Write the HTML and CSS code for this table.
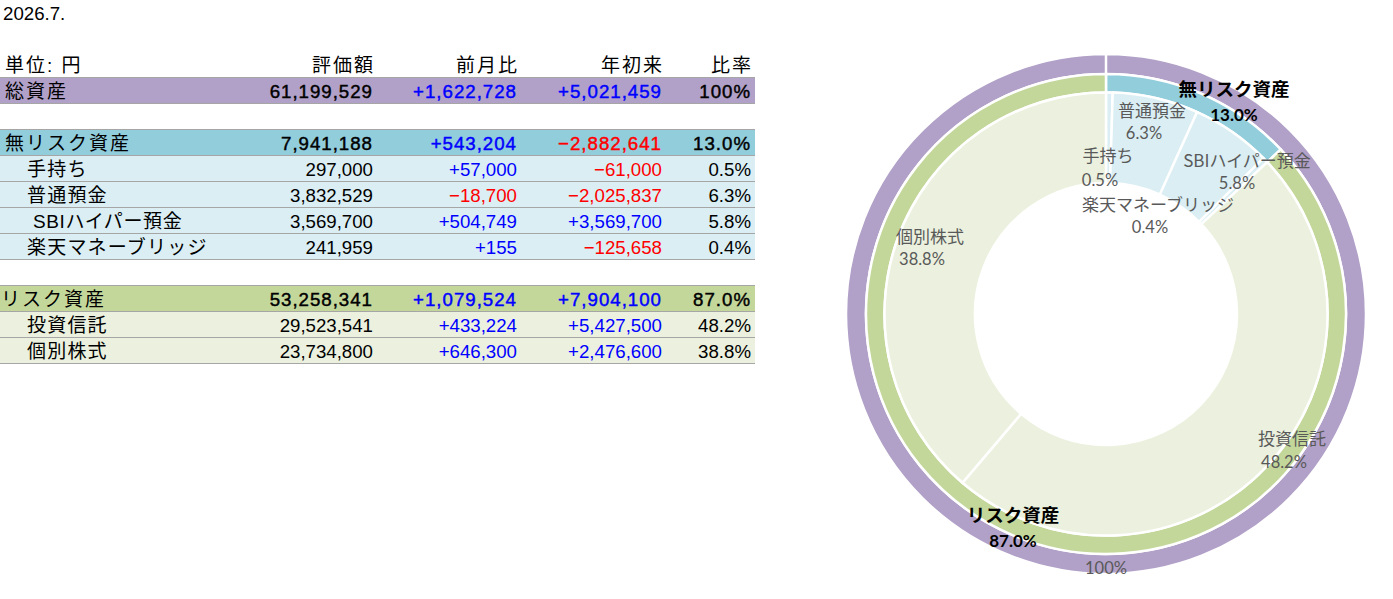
FILE: index.html
```html
<!DOCTYPE html>
<html lang="ja">
<head>
<meta charset="utf-8">
<title>資産推移 2026.7.</title>
<link rel="stylesheet" href="styles.css">
</head>
<body>
<div class="page">
  <section class="sheet">
    <div class="row plain"><div class="title">2026.7.</div></div>
    <div class="row plain"></div>
    <div class="row head lined">
      <div class="lbl">単位: 円</div>
      <div class="num">評価額</div>
      <div class="num">前月比</div>
      <div class="num">年初来</div>
      <div class="num">比率</div>
    </div>
    <div class="row total lined strong">
      <div class="lbl">総資産</div>
      <div class="num">61,199,529</div>
      <div class="num pos">+1,622,728</div>
      <div class="num pos">+5,021,459</div>
      <div class="num">100%</div>
    </div>
    <div class="row plain lined"></div>
    <div class="row safe lined strong">
      <div class="lbl">無リスク資産</div>
      <div class="num">7,941,188</div>
      <div class="num pos">+543,204</div>
      <div class="num neg">−2,882,641</div>
      <div class="num">13.0%</div>
    </div>
    <div class="row safe-sub lined">
      <div class="lbl sub">手持ち</div>
      <div class="num">297,000</div>
      <div class="num pos">+57,000</div>
      <div class="num neg">−61,000</div>
      <div class="num">0.5%</div>
    </div>
    <div class="row safe-sub lined">
      <div class="lbl sub">普通預金</div>
      <div class="num">3,832,529</div>
      <div class="num neg">−18,700</div>
      <div class="num neg">−2,025,837</div>
      <div class="num">6.3%</div>
    </div>
    <div class="row safe-sub lined">
      <div class="lbl sub sub-latin">SBIハイパー預金</div>
      <div class="num">3,569,700</div>
      <div class="num pos">+504,749</div>
      <div class="num pos">+3,569,700</div>
      <div class="num">5.8%</div>
    </div>
    <div class="row safe-sub lined">
      <div class="lbl sub">楽天マネーブリッジ</div>
      <div class="num">241,959</div>
      <div class="num pos">+155</div>
      <div class="num neg">−125,658</div>
      <div class="num">0.4%</div>
    </div>
    <div class="row plain lined"></div>
    <div class="row risk lined strong">
      <div class="lbl lbl-tight">リスク資産</div>
      <div class="num">53,258,341</div>
      <div class="num pos">+1,079,524</div>
      <div class="num pos">+7,904,100</div>
      <div class="num">87.0%</div>
    </div>
    <div class="row risk-sub lined">
      <div class="lbl sub">投資信託</div>
      <div class="num">29,523,541</div>
      <div class="num pos">+433,224</div>
      <div class="num pos">+5,427,500</div>
      <div class="num">48.2%</div>
    </div>
    <div class="row risk-sub lined">
      <div class="lbl sub">個別株式</div>
      <div class="num">23,734,800</div>
      <div class="num pos">+646,300</div>
      <div class="num pos">+2,476,600</div>
      <div class="num">38.8%</div>
    </div>
  </section>

  <figure class="chart">
    <svg width="560" height="599" viewBox="0 0 560 599" xmlns="http://www.w3.org/2000/svg">
      <g transform="translate(280,314)" stroke="#ffffff" stroke-width="2.5" stroke-linejoin="miter">
        <path class="c-total" fill-rule="evenodd" d="M0,-260 A260,260 0 1 1 0,260 A260,260 0 1 1 0,-260 L0,-240 A240,240 0 1 0 0,240 A240,240 0 1 0 0,-240 Z"/>
        <path class="c-safe" d="M0,-240 A240,240 0 0 1 174.703,-164.557 L161.236,-151.872 A221.5,221.5 0 0 0 0,-221.5 Z"/>
        <path class="c-risk" d="M174.703,-164.557 A240,240 0 1 1 0,-240 L0,-221.5 A221.5,221.5 0 1 0 161.236,-151.872 Z"/>
        <path class="c-safe-sub" d="M0,-221.5 A221.5,221.5 0 0 1 6.753,-221.397 L3.994,-130.939 A131,131 0 0 0 0,-131 Z"/>
        <path class="c-safe-sub" d="M6.753,-221.397 A221.5,221.5 0 0 1 91.121,-201.893 L53.891,-119.404 A131,131 0 0 0 3.994,-130.939 Z"/>
        <path class="c-safe-sub" d="M91.121,-201.893 A221.5,221.5 0 0 1 157.417,-155.831 L93.100,-92.162 A131,131 0 0 0 53.891,-119.404 Z"/>
        <path class="c-safe-sub" d="M157.417,-155.831 A221.5,221.5 0 0 1 161.236,-151.872 L95.359,-89.821 A131,131 0 0 0 93.100,-92.162 Z"/>
        <path class="c-risk-sub" d="M161.236,-151.872 A221.5,221.5 0 0 1 -143.512,168.727 L-84.876,99.789 A131,131 0 0 0 95.359,-89.821 Z"/>
        <path class="c-risk-sub" d="M-143.512,168.727 A221.5,221.5 0 0 1 0,-221.5 L0,-131 A131,131 0 0 0 -84.876,99.789 Z"/>
      </g>
      <g class="labels">
        <text class="lb-strong" x="408" y="96">無リスク資産</text>
        <text class="pc-strong" x="408" y="121">13.0%</text>
        <text class="lb" x="326" y="117">普通預金</text>
        <text class="pc" x="318" y="139">6.3%</text>
        <text class="lb" x="282" y="162">手持ち</text>
        <text class="pc" x="274" y="186">0.5%</text>
        <text class="lb" x="421" y="167">SBIハイパー預金</text>
        <text class="pc" x="411" y="189">5.8%</text>
        <text class="lb" x="332" y="211">楽天マネーブリッジ</text>
        <text class="pc" x="324" y="233">0.4%</text>
        <text class="lb" x="104" y="243">個別株式</text>
        <text class="pc" x="96" y="265">38.8%</text>
        <text class="lb" x="466" y="445">投資信託</text>
        <text class="pc" x="458" y="468">48.2%</text>
        <text class="lb-strong" x="187" y="522">リスク資産</text>
        <text class="pc-strong" x="187" y="547">87.0%</text>
        <text class="pc" x="280" y="574">100%</text>
      </g>
    </svg>
  </figure>
</div>
</body>
</html>
```

FILE: styles.css
```css
html, body {
  margin: 0;
  padding: 0;
  background: #ffffff;
}

body {
  width: 1393px;
  height: 599px;
  overflow: hidden;
  font-family: "Liberation Sans", "Noto Sans CJK JP", sans-serif;
  font-size: 18.67px;
  color: #000000;
}

.page {
  display: flex;
  align-items: flex-start;
}

.sheet {
  width: 755px;
  display: flex;
  flex-direction: column;
}

.row {
  display: grid;
  grid-template-columns: 200px 177px 144px 145px 89px;
  height: 26px;
  box-sizing: border-box;
  line-height: 27px;
  white-space: nowrap;
}

.row.lined {
  border-bottom: 1px solid #a6a6a6;
}

.title {
  padding-left: 3px;
  grid-column: 1 / 3;
}

.lbl {
  padding-left: 5px;
  font-size: 19px;
  letter-spacing: 2px;
}

.lbl-tight {
  padding-left: 1px;
}

.lbl.sub {
  padding-left: 27px;
  letter-spacing: 1.2px;
}

.lbl.sub-latin {
  padding-left: 33px;
  letter-spacing: 0.6px;
}

.num {
  text-align: right;
  padding-right: 4px;
}

.head .num {
  font-size: 19px;
  letter-spacing: 2px;
  padding-right: 2px;
}

.strong .num {
  -webkit-text-stroke: 0.45px currentColor;
  letter-spacing: 1px;
}

.pos { color: #0000ff; }
.neg { color: #ff0000; }

.total { background: #b1a0c7; }
.safe { background: #92cddc; }
.safe-sub { background: #daeef3; }
.risk { background: #c4d79b; }
.risk-sub { background: #ebf1de; }

.chart {
  margin: 0 0 0 71px;
  padding: 0;
  width: 560px;
  height: 599px;
}

.chart svg {
  display: block;
}

.c-total { fill: #b1a0c7; }
.c-safe { fill: #92cddc; }
.c-risk { fill: #c4d79b; }
.c-safe-sub { fill: #daeef3; }
.c-risk-sub { fill: #ebf1de; }

.labels text {
  text-anchor: middle;
}

.lb {
  font-family: "Noto Sans CJK JP", sans-serif;
  font-size: 17px;
  fill: #595959;
}

.pc {
  font-family: Lato, "Noto Sans", sans-serif;
  font-size: 16.5px;
  fill: #595959;
}

.lb-strong {
  font-family: "Noto Sans CJK JP", sans-serif;
  font-size: 18.5px;
  font-weight: bold;
  fill: #000000;
}

.pc-strong {
  font-family: Lato, "Noto Sans", sans-serif;
  font-size: 17px;
  font-weight: bold;
  fill: #000000;
}
```
